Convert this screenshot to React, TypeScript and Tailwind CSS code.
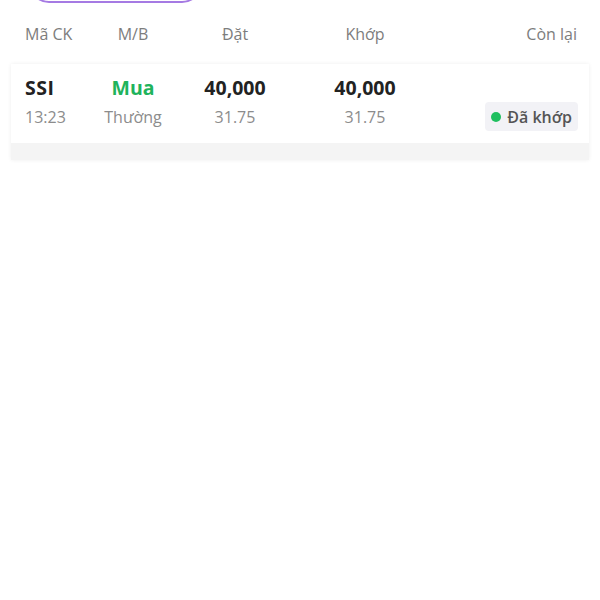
import React from "react";

export default function App() {
  const font = { fontFamily: '"Open Sans", "Noto Sans", sans-serif' };
  return (
    <div className="w-[600px] h-[600px] bg-white overflow-hidden" style={font}>
      <div className="pl-[29px]">
        <div className="w-[173px] h-[40px] -mt-[37px] rounded-full border-2 border-[#a57ae3]" />
      </div>
      <div className="flex items-center h-[24px] mt-[19px] pl-[25px] pr-[23px] text-[16px] leading-[24px] text-[#7d7d7d]">
        <div className="w-[70px]">Mã CK</div>
        <div className="w-[76px] text-center">M/B</div>
        <div className="w-[128px] text-center">Đặt</div>
        <div className="w-[132px] text-center">Khớp</div>
        <div className="flex-1 text-right">Còn lại</div>
      </div>
      <div className="mx-[11px] mt-[18px] bg-white shadow-[0_0_4px_rgba(0,0,0,0.07)]">
        <div className="pt-[12px] pb-[12px] pl-[14px] pr-[11px]">
          <div className="flex items-center h-[24px] text-[19.5px] leading-[24px] font-bold text-[#222]">
            <div className="w-[70px] tracking-[0.5px]">SSI</div>
            <div className="w-[76px] text-center text-[#1fb35c]">Mua</div>
            <div className="w-[128px] text-center">40,000</div>
            <div className="w-[132px] text-center">40,000</div>
            <div className="flex-1" />
          </div>
          <div className="flex items-center h-[29px] mt-[2px] text-[16px] leading-[24px] text-[#8c8c8c]">
            <div className="w-[70px]">13:23</div>
            <div className="w-[76px] text-center">Thường</div>
            <div className="w-[128px] text-center">31.75</div>
            <div className="w-[132px] text-center">31.75</div>
            <div className="flex-1 flex justify-end">
              <div className="flex items-center gap-[6px] h-[29px] px-[6px] rounded-[4px] bg-[#f2f2f6] text-[#555] font-semibold">
                <span className="w-[10px] h-[10px] rounded-full bg-[#1fbf5f]" />
                <span>Đã khớp</span>
              </div>
            </div>
          </div>
        </div>
        <div className="h-[17px] bg-[#f4f4f4]" />
      </div>
    </div>
  );
}
